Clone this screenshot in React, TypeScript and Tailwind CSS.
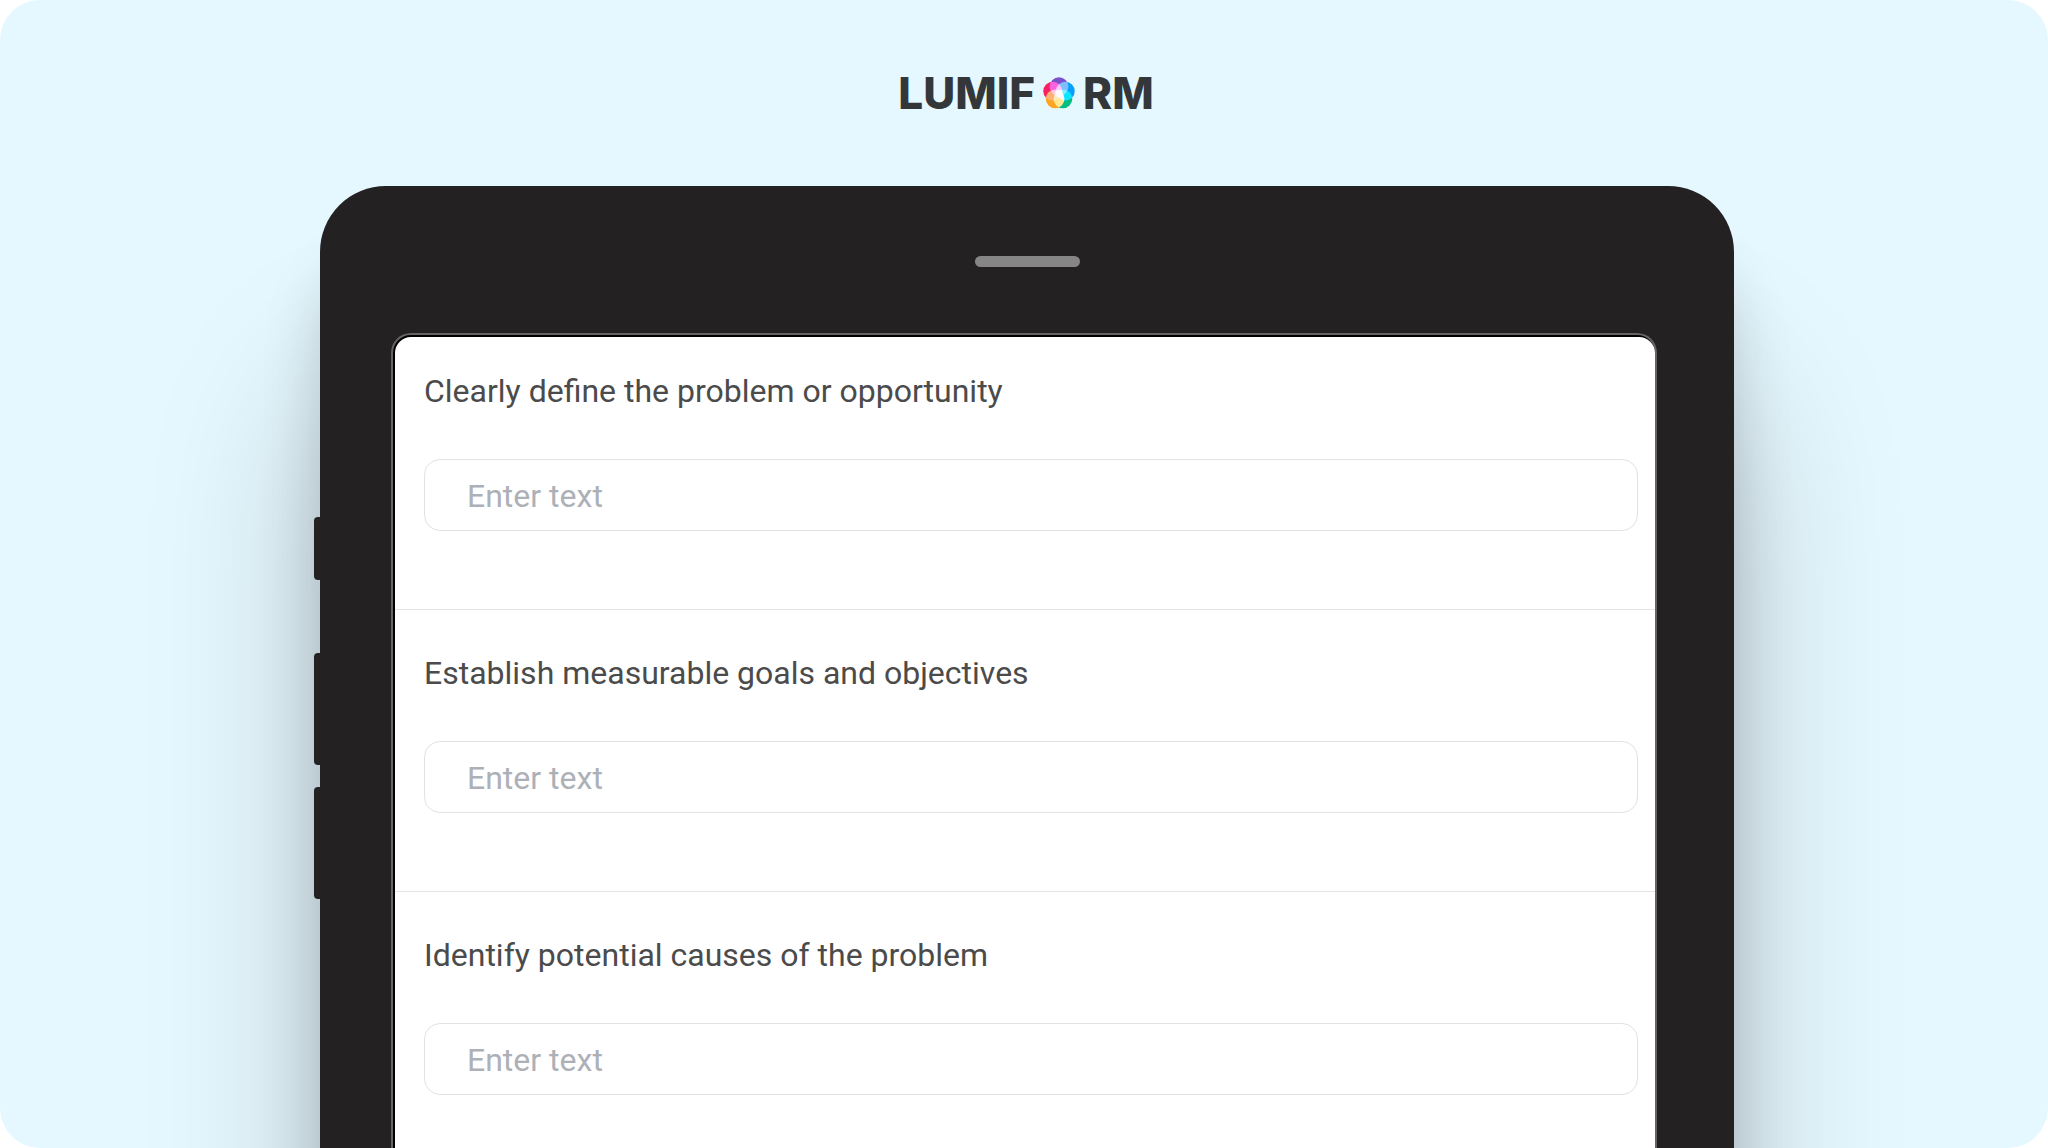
import React from 'react';

interface Question {
  id: string;
  label: string;
}

const questions: Question[] = [
  { id: 'problem', label: 'Clearly define the problem or opportunity' },
  { id: 'goals', label: 'Establish measurable goals and objectives' },
  { id: 'causes', label: 'Identify potential causes of the problem' },
];

// Five overlapping petals that stand in for the "O" of the wordmark
const LogoMark: React.FC = () => (
  <svg className="w-8 h-8 isolate" viewBox="0 0 32 32" aria-hidden="true">
    <circle className="mix-blend-screen" cx="16" cy="9.6" r="9.4" fill="#7c4fcb" />
    <circle className="mix-blend-screen" cx="22.3" cy="14.2" r="9.4" fill="#06a0fb" />
    <circle className="mix-blend-screen" cx="19.9" cy="21.8" r="9.4" fill="#04bd80" />
    <circle className="mix-blend-screen" cx="12.1" cy="21.8" r="9.4" fill="#ffa51f" />
    <circle className="mix-blend-screen" cx="9.7" cy="14.2" r="9.4" fill="#f91f60" />
    <circle cx="16" cy="16.4" r="4" fill="#fff" opacity="0.5" />
  </svg>
);

const Logo: React.FC = () => (
  <div className="flex items-center gap-2 pl-1 font-['Inter',sans-serif] text-[44px] leading-none font-extrabold text-[#33373a]">
    <span>LUMIF</span>
    <LogoMark />
    <span>RM</span>
  </div>
);

const SideButtons: React.FC = () => (
  <div className="absolute -left-[6px] top-[331px] flex flex-col">
    <span className="h-[63px] w-2 rounded-l-sm bg-[#232122]" />
    <span className="mt-[73px] h-28 w-2 rounded-l-sm bg-[#232122]" />
    <span className="mt-[22px] h-28 w-2 rounded-l-sm bg-[#232122]" />
  </div>
);

const QuestionRow: React.FC<{ question: Question }> = ({ question }) => (
  <div className="flex flex-col border-b border-[#e4e4e4] pt-[43px] pr-[17px] pb-[78px] pl-[29px] first:pt-[34px] last:border-b-0 last:pb-[50px]">
    <label htmlFor={question.id} className="text-[32px] leading-[40px] text-[#4b4b4b]">
      {question.label}
    </label>
    <input
      id={question.id}
      type="text"
      placeholder="Enter text"
      className="mt-12 h-[72px] w-full rounded-2xl border border-[#e2e2e2] bg-white pt-[2px] pl-[42px] pr-4 text-[32px] text-[#4b4b4b] outline-none placeholder:text-[#adb1b7]"
    />
  </div>
);

const Tablet: React.FC = () => (
  <div className="relative ml-80 mr-[314px] flex flex-1 flex-col rounded-t-[66px] bg-[#232122] pt-[70px] shadow-[0_200px_170px_rgba(0,0,0,0.22),0_80px_60px_rgba(0,0,0,0.16)]">
    <SideButtons />
    <div className="h-[11px] w-[105px] self-center rounded-full bg-[#868686]" />
    <div className="mt-[66px] mr-[77px] ml-[71px] flex flex-1 flex-col rounded-t-[20px] border-2 border-b-0 border-[#656364] bg-black pt-[2px] pl-[2px]">
      <form className="flex-1 rounded-t-2xl bg-white">
        {questions.map((question) => (
          <QuestionRow key={question.id} question={question} />
        ))}
      </form>
    </div>
  </div>
);

export default function App() {
  return (
    <main className="flex min-h-screen flex-col overflow-hidden rounded-[40px] bg-[#e6f8ff] font-['Roboto',sans-serif]">
      <header className="flex h-[186px] items-center justify-center">
        <Logo />
      </header>
      <Tablet />
    </main>
  );
}
